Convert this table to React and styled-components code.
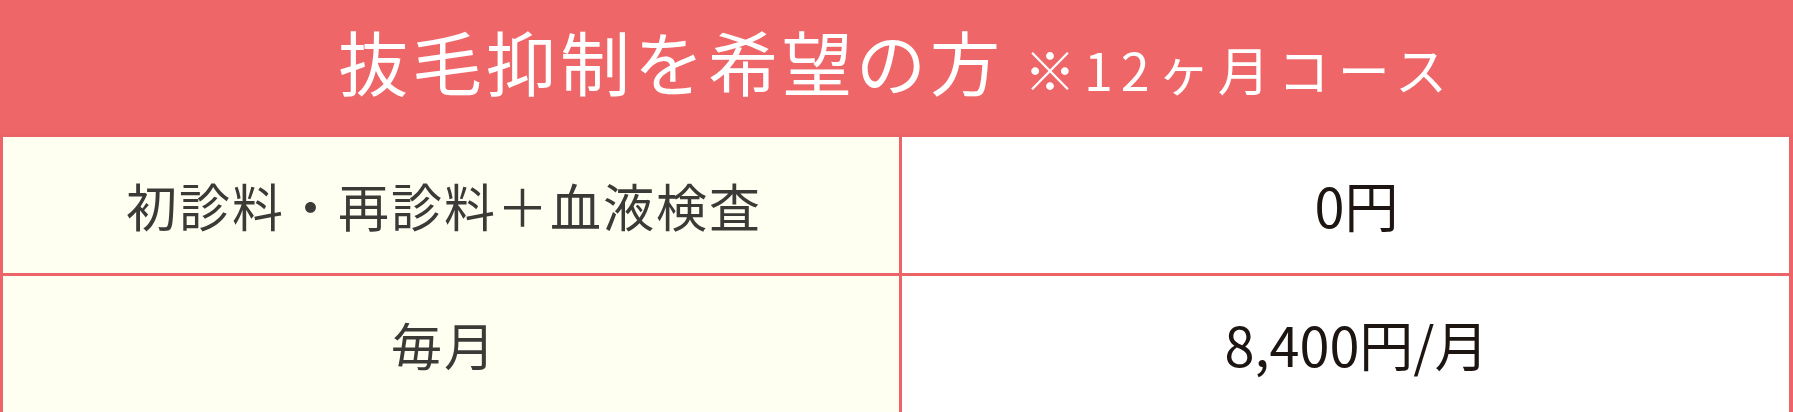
import React from 'react'
import styled, { createGlobalStyle } from 'styled-components'

const GlobalStyle = createGlobalStyle`
    html, body {
        margin: 0;
        padding: 0;
        background: #ffffff;
    }
    body {
        font-family: "Noto Sans CJK JP", "Noto Sans", sans-serif;
    }
`

const PriceTable = styled.section`
    display: grid;
    grid-template-columns: 896px 1fr;
    gap: 3px;
    width: 1793px;
    box-sizing: border-box;
    padding: 0 4px 3px 3px;
    background: #ec6467;
`

const Heading = styled.h2`
    grid-column: 1 / -1;
    height: 134px;
    margin: 0 -4px 0 -3px;
    display: flex;
    justify-content: center;
    align-items: baseline;
    padding-top: 15px;
    box-sizing: border-box;
    background: #ee6668;
    color: #ffffff;
    font-weight: 400;
    font-size: 70px;
    letter-spacing: 4px;
    line-height: 1.3;
`

const Note = styled.span`
    font-size: 52px;
    letter-spacing: 8px;
    margin-left: 20px;
`

const Cell = styled.div`
    height: 136px;
    display: flex;
    align-items: center;
    justify-content: center;
    line-height: 1;
    font-size: ${props => props.label ? '51px' : '54px'};
    padding: ${props => props.label ? '0 14px 0 0' : '0 0 0 22px'};
    background: ${props => props.label ? '#fefef1' : '#ffffff'};
    color: ${props => props.label ? '#3c3a37' : '#1c1512'};
    letter-spacing: ${props => props.label ? '2px' : '0'};
`

const rows = [
    { label: '初診料・再診料＋血液検査', price: '0円' },
    { label: '毎月', price: '8,400円/月' },
]

const App = () => {
    return (
        <>
            <GlobalStyle />
            <PriceTable>
                <Heading>
                    抜毛抑制を希望の方
                    <Note>※12ヶ月コース</Note>
                </Heading>
                {rows.map((row, idx) => (
                    <React.Fragment key={`row ${idx}`}>
                        <Cell label>{row.label}</Cell>
                        <Cell>{row.price}</Cell>
                    </React.Fragment>
                ))}
            </PriceTable>
        </>
    )
}

export default App
